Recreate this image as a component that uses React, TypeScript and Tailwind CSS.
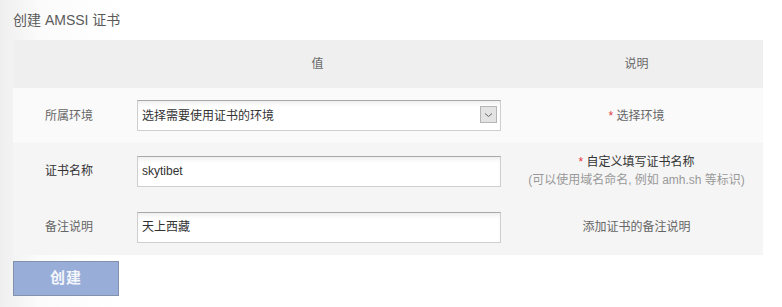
import React from 'react';

const font = { fontFamily: '"Liberation Sans", "Noto Sans CJK SC", sans-serif' };

function Field({ value }: { value: string }) {
  return (
    <div className="h-[31px] w-[364px] border border-[#cfcfcf] border-t-[#a9a9a9] bg-white shadow-[inset_0_4px_5px_-2px_rgba(0,0,0,0.08)] px-[4px] flex items-center text-[12px] text-[#333]">
      {value}
    </div>
  );
}

export default function App() {
  return (
    <div
      className="w-[782px] h-[307px] bg-[linear-gradient(to_right,#efefef_0px,#fbfbfb_40px,#ffffff_120px)]"
      style={font}
    >
      <div className="pl-[13px] pr-[19px]">
        <h1 className="h-[40px] pt-[11px] text-[14px] text-[#5a5a5a] leading-[18px]">创建 AMSSI 证书</h1>

        <table className="w-[750px] border-collapse text-[12px] text-[#666]">
          <colgroup>
            <col className="w-[112px]" />
            <col className="w-[385px]" />
            <col />
          </colgroup>
          <thead>
            <tr className="h-[48px] bg-[#efefef] text-[#6a6a6a]">
              <th className="font-normal"></th>
              <th className="font-normal">值</th>
              <th className="font-normal">说明</th>
            </tr>
          </thead>
          <tbody>
            <tr className="h-[55px] bg-[#fafafa]">
              <td className="text-center">所属环境</td>
              <td className="pl-[12px]">
                <div className="relative h-[31px] w-[364px] border border-[#cfcfcf] border-t-[#a9a9a9] bg-white shadow-[inset_0_4px_5px_-2px_rgba(0,0,0,0.08)] pl-[4px] flex items-center text-[12px] text-[#333]">
                  选择需要使用证书的环境
                  <div className="absolute right-[3px] top-[5px] w-[17px] h-[17px] bg-[#e3e3e3] border border-[#b5b5b5] flex items-center justify-center">
                    <svg width="9" height="6" viewBox="0 0 9 6" fill="none">
                      <path d="M1 1.5 L4.5 4.5 L8 1.5" stroke="#666" strokeWidth="1" />
                    </svg>
                  </div>
                </div>
              </td>
              <td className="text-center">
                <span className="text-[#e4393c]">*</span> 选择环境
              </td>
            </tr>
            <tr className="h-[56px] bg-[#f5f5f5]">
              <td className="text-center text-[#333]">证书名称</td>
              <td className="pl-[12px]">
                <Field value="skytibet" />
              </td>
              <td className="text-center leading-[18px]">
                <div className="text-[#333]">
                  <span className="text-[#e4393c]">*</span> 自定义填写证书名称
                </div>
                <div className="text-[#999]">(可以使用域名命名, 例如 amh.sh 等标识)</div>
              </td>
            </tr>
            <tr className="h-[56px] bg-[#f5f5f5]">
              <td className="text-center">备注说明</td>
              <td className="pl-[12px]">
                <Field value="天上西藏" />
              </td>
              <td className="text-center">添加证书的备注说明</td>
            </tr>
          </tbody>
        </table>

        <button className="mt-[6px] w-[106px] h-[35px] bg-[#98aed9] border border-[#8392ac] text-[#f4f6fb] text-[15px] font-bold tracking-[1px]">
          创建
        </button>
      </div>
    </div>
  );
}
